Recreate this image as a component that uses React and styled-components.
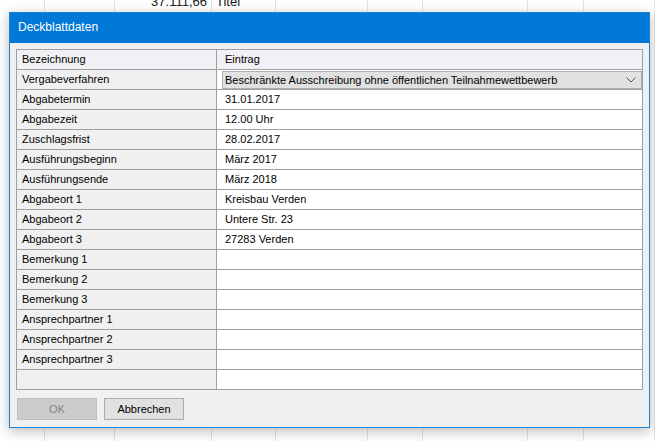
import styled, { createGlobalStyle } from "styled-components";

const GlobalStyle = createGlobalStyle`
  html, body {
    margin: 0;
    padding: 0;
    background: #ffffff;
  }
  body {
    font-family: "Liberation Sans", Arial, sans-serif;
    font-size: 11px;
    color: #000000;
  }
`;

const sheetColumns = [45, 70, 97, 64, 92, 55, 105, 56, 71];

const rows = [
  ["Vergabeverfahren", "Beschränkte Ausschreibung ohne öffentlichen Teilnahmewettbewerb", true],
  ["Abgabetermin", "31.01.2017"],
  ["Abgabezeit", "12.00 Uhr"],
  ["Zuschlagsfrist", "28.02.2017"],
  ["Ausführungsbeginn", "März 2017"],
  ["Ausführungsende", "März 2018"],
  ["Abgabeort 1", "Kreisbau Verden"],
  ["Abgabeort 2", "Untere Str. 23"],
  ["Abgabeort 3", "27283 Verden"],
  ["Bemerkung 1", ""],
  ["Bemerkung 2", ""],
  ["Bemerkung 3", ""],
  ["Ansprechpartner 1", ""],
  ["Ansprechpartner 2", ""],
  ["Ansprechpartner 3", ""],
  ["", ""],
];

const App = () => {
  return (
    <>
      <GlobalStyle />
      <Screen>
        <Sheet>
          {sheetColumns.map((w, i) => (
            <SheetColumn key={i} width={w}>
              {i === 2 && <SheetText align="right">37.111,66</SheetText>}
              {i === 3 && <SheetText>Titel</SheetText>}
            </SheetColumn>
          ))}
        </Sheet>

        <Dialog>
          <TitleBar>Deckblattdaten</TitleBar>
          <Body>
            <Grid>
              <HeaderCell>Bezeichnung</HeaderCell>
              <HeaderCell last>Eintrag</HeaderCell>
              {rows.map(([label, value, combo], i) => (
                <Row key={i}>
                  <LabelCell>{label}</LabelCell>
                  <ValueCell>
                    {combo ? (
                      <Combo>
                        <span>{value}</span>
                        <svg width="10" height="6" viewBox="0 0 10 6">
                          <path d="M0.5 0.5 L5 5 L9.5 0.5" fill="none" stroke="#555" strokeWidth="1" />
                        </svg>
                      </Combo>
                    ) : (
                      value
                    )}
                  </ValueCell>
                </Row>
              ))}
            </Grid>
            <ButtonRow>
              <Button disabled>OK</Button>
              <Button>Abbrechen</Button>
            </ButtonRow>
          </Body>
        </Dialog>
      </Screen>
    </>
  );
};

export default App;

const Screen = styled.div`
  position: relative;
  width: 655px;
  height: 441px;
  overflow: hidden;
  background: #ffffff;
`;

const Sheet = styled.div`
  display: flex;
  height: 100%;
`;

const SheetColumn = styled.div`
  flex: 0 0 ${({ width }) => width}px;
  height: 100%;
  border-right: 1px solid #e3e3e3;
  box-sizing: border-box;
`;

const SheetText = styled.div`
  margin-top: -6px;
  padding: 0 4px;
  font-size: 13px;
  color: #222;
  text-align: ${({ align }) => align || "left"};
`;

const Dialog = styled.div`
  position: absolute;
  left: 9px;
  top: 12px;
  width: 641px;
  height: 416px;
  box-sizing: border-box;
  border: 1px solid #1883d7;
  background: #f0f0f0;
  box-shadow: 0 3px 12px rgba(0, 0, 0, 0.28);
  display: flex;
  flex-direction: column;
`;

const TitleBar = styled.div`
  height: 30px;
  background: #0078d7;
  color: #ffffff;
  font-size: 12px;
  line-height: 29px;
  padding-left: 8px;
`;

const Body = styled.div`
  padding: 6px 6px 0 6px;
  display: flex;
  flex-direction: column;
`;

const Grid = styled.div`
  display: grid;
  grid-template-columns: 200px 1fr;
  width: 627px;
  box-sizing: border-box;
  border: 1px solid #a0a0a0;
  border-bottom: none;
  background: #ffffff;
`;

const Row = styled.div`
  display: contents;
`;

const Cell = styled.div`
  height: 20px;
  box-sizing: border-box;
  border-bottom: 1px solid #a0a0a0;
  line-height: 19px;
  white-space: nowrap;
  overflow: hidden;
`;

const HeaderCell = styled(Cell)`
  background: #f0f0f5;
  padding-left: ${({ last }) => (last ? "8px" : "5px")};
  border-right: ${({ last }) => (last ? "none" : "1px solid #a0a0a0")};
`;

const LabelCell = styled(Cell)`
  background: #f0f0f0;
  padding-left: 5px;
  border-right: 1px solid #a0a0a0;
`;

const ValueCell = styled(Cell)`
  background: #ffffff;
  padding-left: 8px;
  display: flex;
  align-items: center;
`;

const Combo = styled.div`
  margin-left: -3px;
  width: 420px;
  height: 18px;
  box-sizing: border-box;
  border: 1px solid #adadad;
  background: #e1e1e1;
  display: flex;
  align-items: center;
  justify-content: space-between;
  padding: 0 5px 0 2px;
  line-height: 16px;
`;

const ButtonRow = styled.div`
  display: flex;
  gap: 7px;
  margin-top: 8px;
  padding-left: 1px;
`;

const Button = styled.button`
  width: 80px;
  height: 22px;
  box-sizing: border-box;
  font-family: "Liberation Sans", Arial, sans-serif;
  font-size: 11px;
  border: 1px solid ${({ disabled }) => (disabled ? "#bfbfbf" : "#adadad")};
  background: ${({ disabled }) => (disabled ? "#cccccc" : "#e1e1e1")};
  color: ${({ disabled }) => (disabled ? "#838383" : "#000000")};
  padding: 0;
`;
